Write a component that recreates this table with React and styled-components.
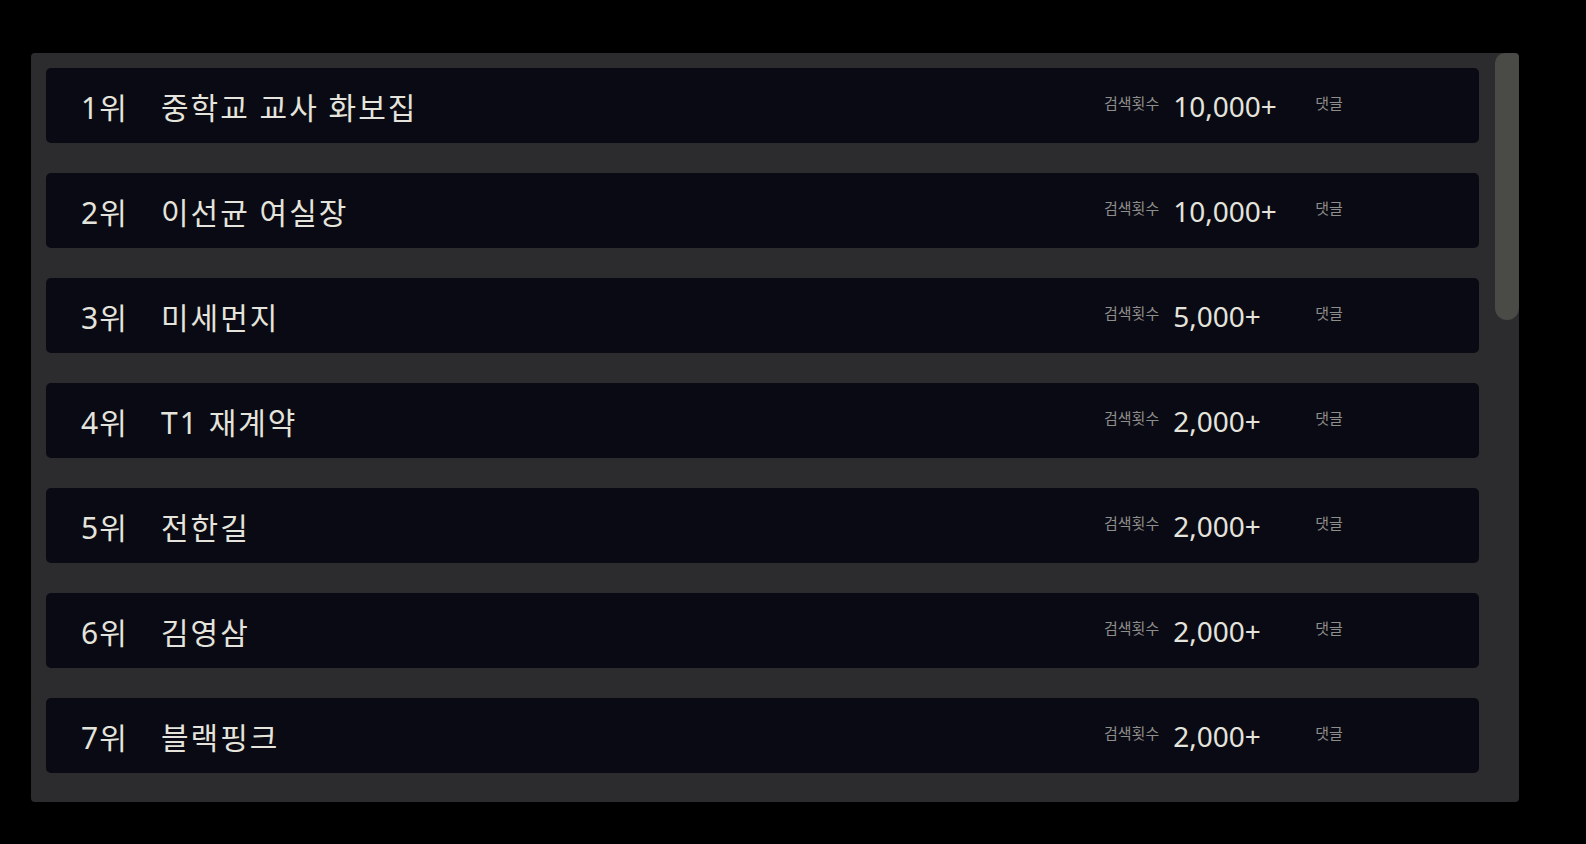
import React from 'react';
import styled, {createGlobalStyle} from 'styled-components';
// -----------------------------------------------------------------------------

const GlobalStyle = createGlobalStyle`
  html, body {
    margin: 0;
    padding: 0;
    background: #000;
  }
  body {
    font-family: "Noto Sans", "Noto Sans CJK KR", sans-serif;
  }
`;

const Page = styled.main`
  padding: 53px 0 0 31px;
  height: 844px;
  box-sizing: border-box;
`;

const Frame = styled.section`
  display: flex;
  width: 1488px;
  height: 749px;
  background: #2c2c2e;
  border-radius: 4px;
  overflow: hidden;
`;

const List = styled.ol`
  flex: 1;
  display: flex;
  flex-direction: column;
  gap: 30px;
  list-style: none;
  margin: 0;
  padding: 15px 16px 0 15px;
  overflow: hidden;
`;

const ScrollTrack = styled.div`
  width: 24px;
  flex-shrink: 0;
`;

const Thumb = styled.div`
  height: 267px;
  background: #4a4a46;
  border-radius: 10px 4px 12px 12px;
`;

const Row = styled.li`
  display: flex;
  align-items: center;
  flex-shrink: 0;
  height: 75px;
  padding-left: 35px;
  background: #0a0a14;
  border-radius: 5px;
  color: #e4e4dc;
`;

const Rank = styled.span`
  width: 80px;
  font-size: 30px;
  letter-spacing: 1px;
`;

const Title = styled.span`
  flex: 1;
  font-size: 30px;
  letter-spacing: 2px;
`;

const Stats = styled.div`
  display: flex;
  align-items: flex-start;
  width: 375px;
`;

const Label = styled.span`
  font-size: 15px;
  color: #8e8e8a;
  margin-top: 4px;
  margin-right: ${props => props.gap}px;
`;

const Count = styled.span`
  width: 142px;
  font-size: 28px;
  line-height: 1.2;
  margin-top: 2px;
`;

// -----------------------------------------------------------------------------

const keywords = [
  {title: '중학교 교사 화보집', count: '10,000+'},
  {title: '이선균 여실장', count: '10,000+'},
  {title: '미세먼지', count: '5,000+'},
  {title: 'T1 재계약', count: '2,000+'},
  {title: '전한길', count: '2,000+'},
  {title: '김영삼', count: '2,000+'},
  {title: '블랙핑크', count: '2,000+'},
];

const App = () => {
  return (
    <Page>
      <GlobalStyle />
      <Frame>
        <List>
          {keywords.map((item, i) => (
            <Row key={item.title}>
              <Rank>{i + 1}위</Rank>
              <Title>{item.title}</Title>
              <Stats>
                <Label gap={14}>검색횟수</Label>
                <Count>{item.count}</Count>
                <Label gap={0}>댓글</Label>
              </Stats>
            </Row>
          ))}
        </List>
        <ScrollTrack>
          <Thumb />
        </ScrollTrack>
      </Frame>
    </Page>
  );
};

export default App;
